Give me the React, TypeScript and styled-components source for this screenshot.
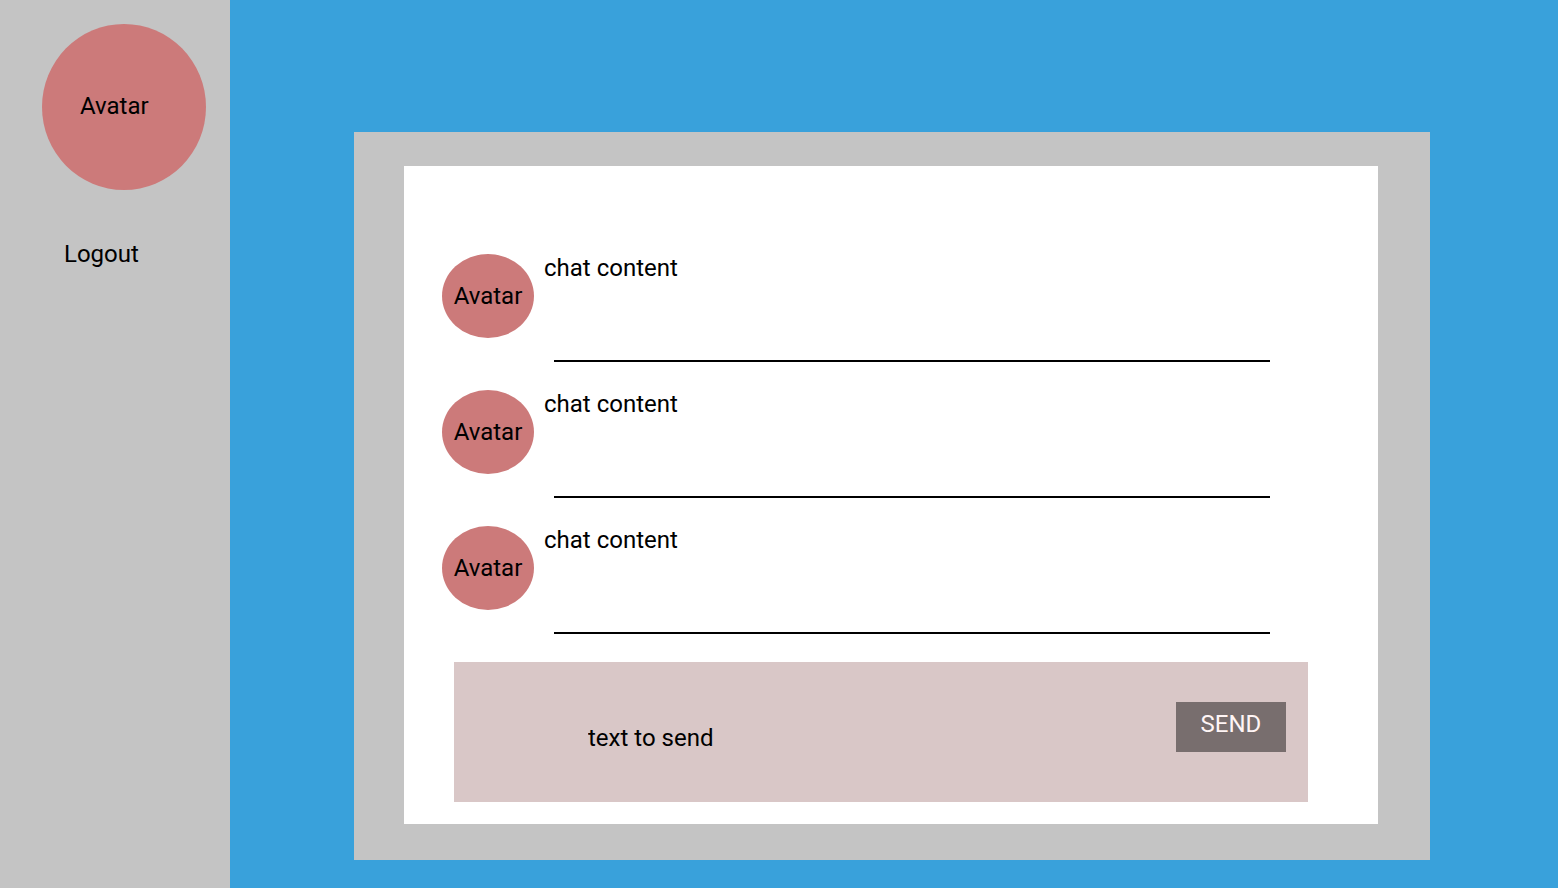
import React, { useState } from "react";
import styled, { createGlobalStyle } from "styled-components";

const GlobalStyle = createGlobalStyle`
  *, *::before, *::after { box-sizing: border-box; }
  body {
    margin: 0;
    font-family: Roboto, sans-serif;
    font-size: 24px;
    line-height: 28px;
    color: #000;
  }
`;

const Page = styled.div`
  display: flex;
  min-height: 100vh;
  background: #39a1db;
`;

const Sidebar = styled.aside`
  flex: 0 0 230px;
  display: flex;
  flex-direction: column;
  align-items: flex-start;
  padding: 24px 24px 24px 42px;
  background: #c4c4c4;
`;

const Avatar = styled.div<{ $large?: boolean }>`
  flex: none;
  display: flex;
  align-items: center;
  justify-content: ${(p) => (p.$large ? "flex-start" : "center")};
  width: ${(p) => (p.$large ? 164 : 92)}px;
  height: ${(p) => (p.$large ? 166 : 84)}px;
  padding: ${(p) => (p.$large ? "0 0 2px 38px" : "0")};
  border-radius: 50%;
  background: #cc7a7a;
`;

const LogoutLink = styled.a`
  margin: 50px 0 0 22px;
  color: inherit;
  text-decoration: none;
`;

const Main = styled.main`
  flex: 1;
  display: flex;
  flex-direction: column;
  padding: 132px 128px 28px 124px;
`;

const Frame = styled.section`
  flex: 1;
  display: flex;
  flex-direction: column;
  padding: 34px 52px 36px 50px;
  background: #c4c4c4;
`;

const Panel = styled.div`
  flex: 1;
  display: flex;
  flex-direction: column;
  padding: 88px 70px 22px 38px;
  background: #fff;
`;

const MessageList = styled.ul`
  display: flex;
  flex-direction: column;
  gap: 28px;
  margin: 0 38px 28px 0;
  padding: 0;
  list-style: none;
`;

const Message = styled.li`
  display: flex;
  gap: 10px;
  min-height: 108px;
`;

const MessageBody = styled.div`
  flex: 1;
  display: flex;
  flex-direction: column;
  justify-content: space-between;
`;

const MessageText = styled.p`
  margin: 0;
`;

const Divider = styled.hr`
  align-self: stretch;
  height: 2px;
  margin: 0 0 0 10px;
  border: 0;
  background: #000;
`;

const Composer = styled.form`
  display: flex;
  align-items: flex-start;
  gap: 24px;
  min-height: 140px;
  margin-left: 12px;
  padding: 40px 22px 22px 134px;
  background: #d9c7c7;
`;

const MessageInput = styled.input`
  flex: 1;
  min-width: 0;
  height: 28px;
  margin: 22px 0 0;
  padding: 0;
  border: 0;
  outline: 0;
  background: transparent;
  color: #000;
  font: inherit;

  &::placeholder {
    color: #000;
    opacity: 1;
  }
`;

const SendButton = styled.button`
  width: 110px;
  height: 50px;
  padding: 0 0 6px;
  border: 0;
  background: #786e6e;
  color: #fff5f5;
  font: inherit;
  cursor: pointer;
`;

const messages = [
  { id: 1, text: "chat content" },
  { id: 2, text: "chat content" },
  { id: 3, text: "chat content" },
];

export default function App() {
  const [draft, setDraft] = useState("");

  return (
    <>
      <GlobalStyle />
      <Page>
        <Sidebar>
          <Avatar $large>Avatar</Avatar>
          <LogoutLink href="#logout">Logout</LogoutLink>
        </Sidebar>
        <Main>
          <Frame>
            <Panel>
              <MessageList>
                {messages.map((message) => (
                  <Message key={message.id}>
                    <Avatar>Avatar</Avatar>
                    <MessageBody>
                      <MessageText>{message.text}</MessageText>
                      <Divider />
                    </MessageBody>
                  </Message>
                ))}
              </MessageList>
              <Composer
                onSubmit={(event) => {
                  event.preventDefault();
                  setDraft("");
                }}
              >
                <MessageInput
                  type="text"
                  aria-label="Message"
                  placeholder="text to send"
                  value={draft}
                  onChange={(event) => setDraft(event.target.value)}
                />
                <SendButton type="submit">SEND</SendButton>
              </Composer>
            </Panel>
          </Frame>
        </Main>
      </Page>
    </>
  );
}
